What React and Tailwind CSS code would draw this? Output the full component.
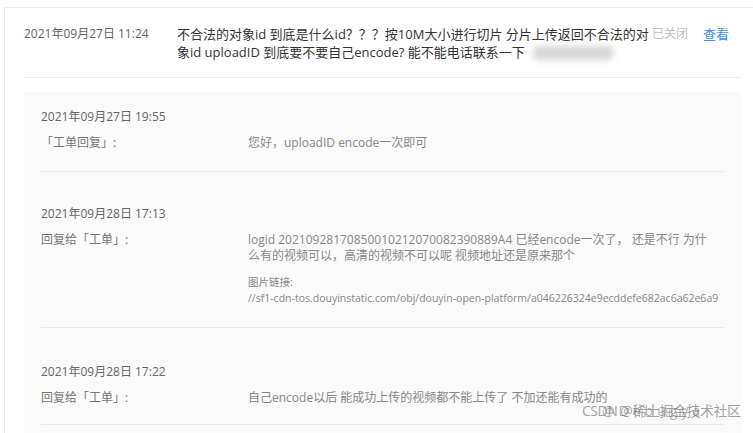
import React from 'react';

const replies = [
	{
		time: '2021年09月27日 19:55',
		who: '「工单回复」:',
		text: '您好，uploadID encode一次即可',
		pad: 'pt-[16px] pb-[20px]',
	},
	{
		time: '2021年09月28日 17:13',
		who: '回复给「工单」:',
		text: 'logid 20210928170850010212070082390889A4 已经encode一次了， 还是不行 为什么有的视频可以，高清的视频不可以呢 视频地址还是原来那个',
		link: '//sf1-cdn-tos.douyinstatic.com/obj/douyin-open-platform/a046226324e9ecddefe682ac6a62e6a9',
		pad: 'pt-[33px] pb-[20px]',
	},
	{
		time: '2021年09月28日 17:22',
		who: '回复给「工单」:',
		text: '自己encode以后 能成功上传的视频都不能上传了 不加还能有成功的',
		pad: 'pt-[35px] pb-[18px]',
	},
];

const font = { fontFamily: '"Open Sans", "Noto Sans CJK SC", sans-serif' };

export default function App() {
	return (
		<div className="relative h-[433px] overflow-hidden bg-white pt-[7px] pl-[4px]" style={font}>
			<div className="h-full border-t border-l border-[#ececec] bg-white pl-[19px] pr-[12px]">
				{/* ticket header */}
				<div className="flex items-start border-b border-[#ebebeb] pt-[17px] pb-[16px]">
					<div className="w-[153px] shrink-0 text-[12px] leading-[18px] text-[#666]">2021年09月27日 11:24</div>
					<div className="w-[472px] shrink-0 text-[13px] leading-[18px] text-[#333]">
						不合法的对象id 到底是什么id？？？按10M大小进行切片 分片上传返回不合法的对象id uploadID 到底要不要自己encode? 能不能电话联系一下
						<span className="ml-[8px] inline-block h-[14px] w-[80px] translate-y-[3px] rounded-[4px] bg-[#d8d8d8] blur-[3px]" />
					</div>
					<div className="ml-[3px] text-[12px] leading-[18px] text-[#c0c0c0]">已关闭</div>
					<a className="ml-[15px] cursor-pointer text-[13px] leading-[18px] text-[#3a8ee6]">查看</a>
				</div>

				{/* replies */}
				<div className="mt-[14px] h-full bg-[#fafafa] px-[17px]">
					{replies.map((r, i) => (
						<div key={i} className={`border-b border-[#ebebeb] ${r.pad}`}>
							<div className="text-[12px] leading-[18px] text-[#666]">{r.time}</div>
							<div className="mt-[9px] flex">
								<div className="w-[207px] shrink-0 text-[12px] leading-[16px] text-[#777]">{r.who}</div>
								<div className="w-[465px] text-[12px] leading-[16px] text-[#888]">
									<div>{r.text}</div>
									{r.link && (
										<>
											<div className="mt-[10px] text-[10.5px] leading-[16px] text-[#888]">图片链接:</div>
											<div className="whitespace-nowrap text-[10.5px] leading-[17px] text-[#888]">{r.link}</div>
										</>
									)}
								</div>
							</div>
						</div>
					))}
				</div>
			</div>

			{/* watermark */}
			<div className="pointer-events-none absolute left-[582px] top-[401px] whitespace-nowrap text-[14px] leading-[20px] tracking-[-0.5px] text-[#666]/60">CSDN @稀土掘金技术社区</div>
			<div className="pointer-events-none absolute left-[602px] top-[401px] whitespace-nowrap text-[14px] leading-[20px] tracking-[4px] text-[#666]/50">@Debugya</div>
		</div>
	);
}
